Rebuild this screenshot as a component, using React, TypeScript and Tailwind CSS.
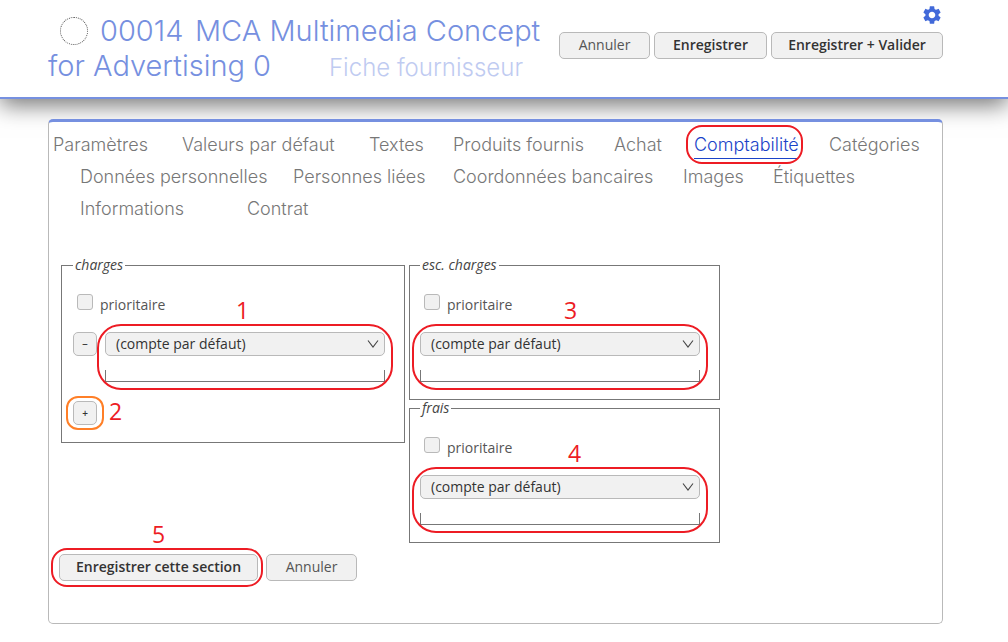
import React, { useState } from "react";
import { MdSettings } from "react-icons/md";

const tabRows = [
  [
    { name: "Paramètres", width: "w-[97px]" },
    { name: "Valeurs par défaut", width: "w-[155px]" },
    { name: "Textes", width: "w-[52px]" },
    { name: "Produits fournis", width: "w-[129px]" },
    { name: "Achat", width: "w-12" },
    { name: "Comptabilité", width: "w-[103px]" },
    { name: "Catégories", width: "w-[91px]" },
  ],
  [
    { name: "Données personnelles", width: "w-[181px]" },
    { name: "Personnes liées", width: "w-32" },
    { name: "Coordonnées bancaires", width: "w-[198px]" },
    { name: "Images", width: "w-[58px]" },
    { name: "Étiquettes", width: "w-[85px]" },
  ],
  [
    { name: "Informations", width: "w-[135px]" },
    { name: "Contrat", width: "w-16" },
  ],
];

const Button: React.FC<{
  text: string;
  bold?: boolean;
  classStyle?: string;
}> = ({ text, bold, classStyle = "" }) => (
  <button
    type="button"
    className={`h-[27px] whitespace-nowrap rounded-[5px] border border-[#b9b9b9] bg-[#f1f1f1] pb-0.5 text-center ${
      bold ? "font-semibold text-[#333]" : "text-[#555]"
    } ${classStyle}`}
  >
    {text}
  </button>
);

const SmallButton: React.FC<{ text: string; label: string }> = ({
  text,
  label,
}) => (
  <button
    type="button"
    aria-label={label}
    className="flex h-6 w-6 items-center justify-center rounded-[5px] border border-[#b9b9b9] bg-[#f1f1f1] text-[10px] font-semibold text-[#333]"
  >
    {text}
  </button>
);

// numbered callout that sits over the form
const Mark: React.FC<{ n: string; classStyle: string }> = ({
  n,
  classStyle,
}) => (
  <span
    className={`pointer-events-none absolute text-[23px] leading-6 text-[#ed1c24] ${classStyle}`}
  >
    {n}
  </span>
);

const Outline: React.FC<{ classStyle: string }> = ({ classStyle }) => (
  <span
    className={`pointer-events-none absolute border-2 ${classStyle}`}
  ></span>
);

const Priority: React.FC<{ id: string }> = ({ id }) => (
  <div className="ml-1 mt-[15px] flex h-6 items-center">
    <input
      id={id}
      type="checkbox"
      className="h-4 w-4 appearance-none rounded-[3px] border border-[#b9b9b9] bg-[#f1f1f1] checked:bg-[#7690e0]"
    />
    <label htmlFor={id} className="pl-[7px] pt-1.5 text-[#555]">
      prioritaire
    </label>
  </div>
);

const Account: React.FC<{ label: string; n: string; markStyle: string }> = ({
  label,
  n,
  markStyle,
}) => (
  <div className="relative w-[280px]">
    <select
      aria-label={`Compte ${label}`}
      className="block h-6 w-full appearance-none rounded-[5px] border border-[#b9b9b9] bg-[#f1f1f1] pl-2.5 font-medium text-[#333]"
    >
      <option>(compte par défaut)</option>
    </select>
    <svg
      viewBox="0 0 12 8"
      className="pointer-events-none absolute right-1.5 top-2 h-2 w-3"
      fill="none"
      stroke="#444"
      strokeWidth="1.1"
    >
      <path d="M1 .5l5 6.5 5-6.5" />
    </svg>
    <input
      type="text"
      aria-label={`Recherche ${label}`}
      className="mt-3.5 block h-3 w-full border border-t-0 border-[#777] bg-transparent outline-none"
    />
    <Outline classStyle="-inset-2 rounded-3xl border-[#ed1c24]" />
    <Mark n={n} classStyle={`-top-[34px] ${markStyle}`} />
  </div>
);

const Group: React.FC<{
  title: string;
  classStyle?: string;
  children: React.ReactNode;
}> = ({ title, classStyle = "pl-2.5", children }) => (
  <fieldset
    className={`border border-[#777] pb-[17px] pr-[19px] ${classStyle}`}
  >
    <legend className="h-5 px-0.5 italic leading-5 text-[#444]">{title}</legend>
    {children}
  </fieldset>
);

const Header = () => (
  <header className="flex justify-between border-b-2 border-[#7690e0] bg-white pb-3 pl-12 pr-[65px] shadow-[0_6px_22px_rgba(0,0,0,0.55)]">
    <h1 className="whitespace-nowrap pt-[13px] font-['Inter','Liberation_Sans',sans-serif] text-[29px] font-light leading-[35px] text-[#7690e0]">
      <span className="flex items-center pl-3">
        <span className="h-7 w-7 rounded-full border border-dotted border-[#555]"></span>
        <span className="w-[107px] pl-3">00014</span>
        <span>MCA Multimedia Concept</span>
      </span>
      <span className="flex items-baseline">
        <span className="w-[281px]">for Advertising 0</span>
        <small className="text-[24px] text-[#bfcbf1]">Fiche fournisseur</small>
      </span>
    </h1>
    <div className="flex flex-col items-end gap-1.5 pt-1">
      <button type="button" aria-label="Réglages">
        <MdSettings size={22} color="#4169d9" />
      </button>
      <div className="flex gap-1">
        <Button text="Annuler" classStyle="w-[91px]" />
        <Button text="Enregistrer" bold classStyle="w-[113px]" />
        <Button text="Enregistrer + Valider" bold classStyle="w-[172px]" />
      </div>
    </div>
  </header>
);

const Tabs = () => {
  const [active, setActive] = useState("Comptabilité");

  return (
    <nav className="pl-1 pt-[7px] font-['Inter','Liberation_Sans',sans-serif] text-[18px] font-light text-[#777]">
      {tabRows.map((row, i) => (
        <div key={i} className={`flex h-8 gap-8 ${i > 0 ? "pl-[27px]" : ""}`}>
          {row.map((tab) => (
            <a
              key={tab.name}
              href="#"
              onClick={() => setActive(tab.name)}
              className={`relative h-[30px] whitespace-nowrap leading-8 ${tab.width} ${
                tab.name === active ? "border-b border-[#1a43c8] text-[#1a43c8]" : ""
              }`}
            >
              {tab.name}
              {tab.name === "Comptabilité" && (
                <Outline classStyle="-bottom-1.5 -left-2 -right-1.5 -top-1 rounded-2xl border-[#ed1c24]" />
              )}
            </a>
          ))}
        </div>
      ))}
    </nav>
  );
};

export default function App() {
  return (
    <div className="bg-white font-['Open_Sans','Liberation_Sans',sans-serif] text-[14px] leading-5">
      <Header />
      <main className="relative mb-[18px] ml-12 mr-[65px] mt-5 rounded-[5px] border border-t-[3px] border-[#b9b9b9] border-t-[#7690e0] bg-white pb-[42px]">
        <Tabs />
        <form className="pt-[30px]">
          <div className="flex items-start gap-1 pl-3">
            <Group title="charges" classStyle="pl-[11px]">
              <Priority id="prio-charges" />
              <div className="mt-[18px] flex gap-2">
                <SmallButton text="−" label="Retirer le compte" />
                <Account label="charges" n="1" markStyle="left-[131px]" />
              </div>
              <div className="relative mt-[19px] w-6">
                <SmallButton text="+" label="Ajouter un compte" />
                <Outline classStyle="-inset-x-[7px] -inset-y-[5px] rounded-xl border-[#ff7f27]" />
                <Mark n="2" classStyle="left-9 -top-0.5" />
              </div>
            </Group>
            <div>
              <Group title="esc. charges">
                <Priority id="prio-esc" />
                <div className="mt-[18px]">
                  <Account label="esc. charges" n="3" markStyle="left-36" />
                </div>
              </Group>
              <div className="-mt-0.5">
                <Group title="frais">
                  <Priority id="prio-frais" />
                  <div className="mt-[18px]">
                    <Account label="frais" n="4" markStyle="left-[148px]" />
                  </div>
                </Group>
              </div>
            </div>
          </div>
          <div className="flex gap-2 pl-2.5 pt-[11px]">
            <div className="relative">
              <Button
                text="Enregistrer cette section"
                bold
                classStyle="w-[199px]"
              />
              <Outline classStyle="-inset-y-1.5 -left-2 -right-[5px] rounded-2xl border-[#ed1c24]" />
              <Mark n="5" classStyle="-top-8 left-[93px]" />
            </div>
            <Button text="Annuler" classStyle="w-[91px]" />
          </div>
        </form>
      </main>
    </div>
  );
}
